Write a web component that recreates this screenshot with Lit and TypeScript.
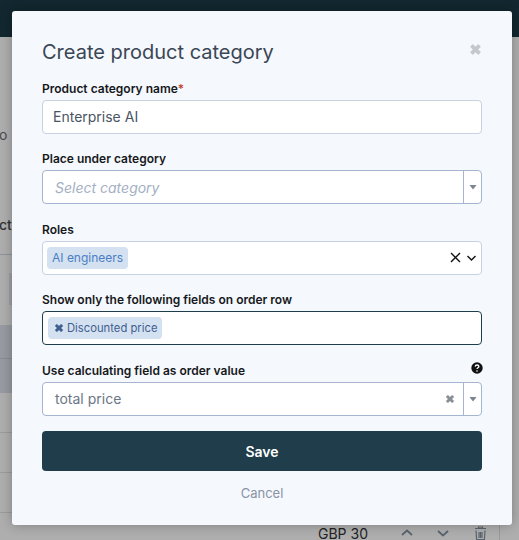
import { LitElement, html, css } from "lit";
import { customElement } from "lit/decorators.js";

const caret = html`<svg class="caret" viewBox="0 0 8 6"><path d="M0.5 1h7L4 5.5z" fill="#7b8491"/></svg>`;
const xIcon = (c: string, cls: string) => html`<svg class=${cls} viewBox="0 0 12 12"><path d="M1.4 3.1 3.1 1.4a.6.6 0 0 1 .8 0L6 3.5l2.1-2.1a.6.6 0 0 1 .8 0l1.7 1.7a.6.6 0 0 1 0 .8L8.5 6l2.1 2.1a.6.6 0 0 1 0 .8l-1.7 1.7a.6.6 0 0 1-.8 0L6 8.5l-2.1 2.1a.6.6 0 0 1-.8 0L1.4 8.9a.6.6 0 0 1 0-.8L3.5 6 1.4 3.9a.6.6 0 0 1 0-.8z" fill=${c}/></svg>`;

@customElement("app-root")
export class AppRoot extends LitElement {
  static styles = css`
    :host { display: block; width: 519px; height: 540px; overflow: hidden; position: relative; background: #aeaeae; font-family: Inter, "Liberation Sans", sans-serif; }
    .topbar { height: 37px; background: #12272f; }
    .bg { position: relative; height: 503px; }
    .bgt { position: absolute; color: #4a4a4a; font-size: 14px; }
    .ctx { font-weight: 500; color: #333; }
    .line { position: absolute; left: 0; width: 12px; height: 1px; background: #9c9c9c; }
    .line.blue { background: #8d949c; }
    .line.mid { background: #888d94; }
    .hl { position: absolute; left: 0; width: 12px; background: #979ba1; }
    .stub { position: absolute; left: 9px; top: 236px; width: 3px; height: 32px; background: #9ea0a3; }
    .vline { position: absolute; left: 499px; top: 488px; width: 1px; height: 15px; background: #999; }
    .priceRow { position: absolute; top: 524px; left: 318px; display: flex; align-items: center; color: #222; font-size: 14px; height: 18px; }
    .modal { position: absolute; left: 12px; top: 11px; width: 500px; height: 514px; box-sizing: border-box; padding: 30px 30px 0; background: #f5f8fc; border-radius: 3px; box-shadow: 0 0 12px rgba(0,0,0,.28); display: flex; flex-direction: column; }
    .head { display: flex; justify-content: space-between; align-items: center; height: 23px; margin-bottom: 16.75px; }
    h2 { margin: 0; font-size: 20px; font-weight: 400; color: #3a4656; line-height: 23px; }
    .close { width: 13px; height: 13px; margin-right: 0; margin-top: -6px; }
    .field { display: flex; flex-direction: column; margin-bottom: 17.5px; }
    .lab { display: flex; justify-content: space-between; align-items: center; font-size: 12px; font-weight: 600; color: #16181c; line-height: 15px; height: 15px; margin-bottom: 4px; }
    .req { color: #c0392b; font-weight: 500; }
    .box { height: 34px; box-sizing: border-box; border: 1px solid #c7d1e2; border-radius: 4px; background: #fff; display: flex; align-items: center; font-size: 14px; color: #4a5564; }
    .box.blue { border-color: #a5b4cf; }
    .box.dark { border-color: #1f3d4a; }
    .txt { flex: 1; padding-left: 10px; }
    .ph { flex: 1; padding-left: 12px; font-style: italic; color: #a3afc2; }
    .val { flex: 1; padding-left: 12px; color: #6b7686; }
    .sep { width: 1px; align-self: stretch; background: #a5b4cf; }
    .carbox { width: 17px; display: flex; justify-content: center; }
    .caret { width: 8px; height: 6px; }
    .tag { border-radius: 4px; height: 22px; display: inline-flex; align-items: center; box-sizing: border-box; }
    .t1 { margin-left: 4px; padding: 0 5px; background: #d4e1f1; color: #4a7fc4; font-size: 12px; }
    .t2 { margin-left: 5px; padding: 0 5px 0 6px; background: #d4e1f1; color: #3f5f8f; gap: 3px; font-size: 11.25px; }
    .spacer { flex: 1; }
    .tx { width: 10px; height: 10px; }
    .clr { width: 10px; height: 10px; }
    .help { width: 12px; height: 12px; margin-right: -1px; margin-top: -4px; }
    .x2 { margin-left: 0; }
    .chev { margin: 0 5px 0 6px; }
    .save { height: 40px; border: 0; border-radius: 4px; background: #1f3d4a; color: #fff; font: 600 14px Inter, "Liberation Sans", sans-serif; margin-top: -2.25px; flex: none; }
    .cancel { text-align: center; color: #8894a6; font-size: 13px; margin-top: 15px; line-height: 15px; }
    .up { margin-left: 33px; }
    .dn { margin-left: 24px; }
    .tr { margin-left: 25px; }
  `;
  render() {
    return html`
      <div class="topbar"></div>
      <div class="bg">
        <span class="bgt" style="left:-1px;top:89px">o s</span>
        <span class="bgt ctx" style="left:-1px;top:179px">ct</span>
        <div class="line blue" style="top:217px"></div>
        <div class="stub"></div>
        <div class="hl" style="top:288px;height:68px"></div>
        <div class="line mid" style="top:321px"></div>
        <div class="line" style="top:395px"></div>
        <div class="line" style="top:435px"></div>
        <div class="line" style="top:475px"></div>
        <div class="vline"></div>
      </div>
      <div class="priceRow">GBP 30
        <svg class="up" width="12" height="12" viewBox="0 0 12 12"><path d="M1 8l5-4.5L11 8" fill="none" stroke="#5a6470" stroke-width="1.8"/></svg>
        <svg class="dn" width="12" height="12" viewBox="0 0 12 12"><path d="M1 4l5 4.5L11 4" fill="none" stroke="#5a6470" stroke-width="1.8"/></svg>
        <svg class="tr" width="13" height="14" viewBox="0 0 13 14"><path d="M1 2.5h11M4.5 2.5V1h4v1.5M2 4.5l.6 9h7.8l.6-9M5 6v6M6.5 6v6M8 6v6" fill="none" stroke="#5a6470" stroke-width="1.2"/></svg>
      </div>
      <div class="modal">
        <div class="head"><h2>Create product category</h2>${xIcon("#c3c8cf", "close")}</div>
        <div class="field">
          <div class="lab"><span>Product category name<span class="req">*</span></span></div>
          <div class="box"><span class="txt">Enterprise AI</span></div>
        </div>
        <div class="field">
          <div class="lab"><span>Place under category</span></div>
          <div class="box blue"><span class="ph">Select category</span><span class="sep"></span><span class="carbox">${caret}</span></div>
        </div>
        <div class="field">
          <div class="lab"><span>Roles</span></div>
          <div class="box">
            <span class="tag t1">AI engineers</span><span class="spacer"></span>
            <svg class="x2" width="11" height="11" viewBox="0 0 11 11"><path d="M1 1l9 9M10 1l-9 9" stroke="#111" stroke-width="1.4" fill="none"/></svg>
            <svg class="chev" width="9" height="6" viewBox="0 0 9 6"><path d="M.5 1l4 4 4-4" stroke="#111" stroke-width="1.4" fill="none"/></svg>
          </div>
        </div>
        <div class="field">
          <div class="lab"><span>Show only the following fields on order row</span></div>
          <div class="box dark"><span class="tag t2">${xIcon("#3f5f8f", "tx")}Discounted price</span></div>
        </div>
        <div class="field">
          <div class="lab"><span>Use calculating field as order value</span>
            <svg class="help" viewBox="0 0 12 12"><circle cx="6" cy="6" r="5.7" fill="#111"/><path d="M4.2 4.6C4.3 3.5 5 3 6 3s1.9.6 1.9 1.5c0 1.3-1.9 1.3-1.9 2.6" stroke="#fff" stroke-width="1.3" fill="none"/><circle cx="6" cy="9" r=".8" fill="#fff"/></svg>
          </div>
          <div class="box blue"><span class="val">total price</span>${xIcon("#8a8f96", "clr")}<span style="width:8px"></span><span class="sep"></span><span class="carbox">${caret}</span></div>
        </div>
        <button class="save">Save</button>
        <div class="cancel">Cancel</div>
      </div>
    `;
  }
}
